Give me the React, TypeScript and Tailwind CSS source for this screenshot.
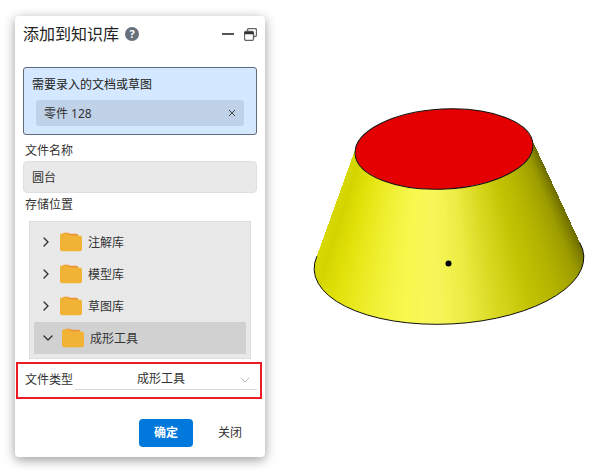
import { useState } from 'react'
import { ChevronDown, ChevronRight } from 'lucide-react'
import clsx from 'clsx'

const FOLDERS = ['注解库', '模型库', '草图库', '成形工具']

// shade of the cone wall by angle in degrees, from the right edge round the front to the left
const SHADES: [number, number[]][] = [
  [-14, [92, 92, 0]],
  [5, [122, 122, 0]],
  [20, [156, 156, 0]],
  [38, [178, 178, 0]],
  [55, [196, 196, 4]],
  [70, [216, 216, 32]],
  [84, [236, 236, 68]],
  [97, [246, 246, 90]],
  [110, [248, 248, 80]],
  [122, [242, 242, 60]],
  [138, [232, 232, 28]],
  [150, [224, 224, 8]],
  [165, [212, 212, 0]],
  [194, [218, 218, 0]],
]

function shadeAt(deg: number) {
  const i = Math.max(1, SHADES.findIndex(([d]) => d >= deg))
  const [d0, c0] = SHADES[i - 1]
  const [d1, c1] = SHADES[i]
  const k = (deg - d0) / (d1 - d0)
  return `rgb(${c0.map((c, n) => Math.round(c + (c1[n] - c) * k)).join(',')})`
}

const TILT = (-3 * Math.PI) / 180

function rim(cx: number, cy: number, rx: number, ry: number, deg: number) {
  const t = (deg * Math.PI) / 180
  const u = rx * Math.cos(t)
  const v = ry * Math.sin(t)
  const x = cx + u * Math.cos(TILT) - v * Math.sin(TILT)
  const y = cy + u * Math.sin(TILT) + v * Math.cos(TILT)
  return `${x.toFixed(2)},${y.toFixed(2)}`
}

const top = (deg: number) => rim(135, 43, 89, 40, deg)
const bottom = (deg: number) => rim(140, 157, 135, 61, deg)

const FACETS = Array.from({ length: 206 }, (_, i) => -13 + i)

function Cone() {
  return (
    <svg viewBox="0 0 279 222" className="w-full max-w-[279px]" role="img" aria-label="圆台">
      <g shapeRendering="crispEdges">
        {FACETS.map((d) => (
          <polygon
            key={d}
            points={`${top(d)} ${top(d + 1)} ${bottom(d + 1)} ${bottom(d)}`}
            fill={shadeAt(d + 0.5)}
          />
        ))}
      </g>
      <path d={`M${bottom(-13)} A135 61 -3 1 1 ${bottom(193)}`} fill="none" stroke="#111" />
      <ellipse cx="135" cy="43" rx="89" ry="40" transform="rotate(-3 135 43)" fill="#e40000" stroke="#111" />
      <circle cx="139.5" cy="157.5" r="3" fill="#000" />
    </svg>
  )
}

function FolderIcon() {
  return (
    <svg viewBox="0 0 22 20" className="h-5 w-[22px] shrink-0" aria-hidden="true">
      <path d="M3 1.5Q3 .8 4 .8H8L10 1.8H16.5Q18 1.8 18 3.2V7H3Z" fill="#ee9536" />
      <path
        d="M0 3Q0 1.6 2 1.6H6.5Q7.5 1.6 8.2 2.4L9.2 3.4H20Q22 3.4 22 5.4V17.2Q22 19.2 20 19.2H2Q0 19.2 0 17.2Z"
        fill="#f0b336"
      />
    </svg>
  )
}

export default function App() {
  const [selected, setSelected] = useState('成形工具')

  return (
    <main className="flex items-start gap-11 bg-white py-4 pr-5 pl-[15px] font-['Noto_Sans','Noto_Sans_CJK_SC',sans-serif] text-xs text-[#333]">
      <section className="w-[250px] shrink-0 rounded bg-white pb-2.5 shadow-[0_3px_12px_rgba(0,0,0,0.4)]">
        <header className="flex h-9 items-center px-2">
          <h1 className="text-base text-[#222]">添加到知识库</h1>
          <button
            aria-label="帮助"
            className="ml-1.5 flex size-3.5 items-center justify-center rounded-full bg-[#66717c] text-[11px] font-bold text-white"
          >
            ?
          </button>
          <button aria-label="最小化" className="ml-auto p-1">
            <svg viewBox="0 0 12 12" className="size-3">
              <path d="M0 6H12" stroke="#555" strokeWidth="2" />
            </svg>
          </button>
          <button aria-label="还原" className="ml-1.5">
            <svg viewBox="0 0 13 13" className="size-[13px]" fill="none" stroke="#666">
              <path d="M3.5 3V2Q3.5 .5 5 .5H11Q12.5 .5 12.5 2V7Q12.5 8.5 11 8.5H9.5" strokeWidth="1.3" />
              <rect x="0.5" y="3.5" width="9" height="9" rx="1.5" strokeWidth="1.3" />
              <path d="M.5 5H9.5" stroke="#333" strokeWidth="2.5" />
            </svg>
          </button>
        </header>

        <div className="mx-2 mt-[15px] rounded-[3px] border border-[#5f6b78] bg-[#d4e8ff] px-2 py-2">
          <p className="pt-px leading-4 text-[#222]">需要录入的文档或草图</p>
          <div className="mx-1 mt-[7px] flex h-[26px] items-center justify-between rounded-[3px] bg-[#c0d2e8] pr-1.5 pl-2">
            <span className="pt-0.5">零件 128</span>
            <button aria-label="移除" className="px-0.5">
              <svg viewBox="0 0 8 8" className="size-2" stroke="#444">
                <path d="M1 1L7 7M7 1L1 7" />
              </svg>
            </button>
          </div>
        </div>

        <div className="mx-2 mt-2 flex flex-col">
          <label htmlFor="name" className="px-0.5 leading-4">
            文件名称
          </label>
          <input
            id="name"
            defaultValue="圆台"
            className="mt-0.5 h-8 w-full rounded border border-[#dcdfe4] bg-[#e9e9e9] px-2 outline-none"
          />
          <p className="mt-1 px-0.5 leading-4">存储位置</p>
        </div>

        <ul className="mx-3.5 mt-2 border border-[#dcdfe6] bg-[#e9e9e9] p-1">
          {FOLDERS.map((name) => {
            const active = name === selected
            const Chevron = active ? ChevronDown : ChevronRight
            return (
              <li key={name}>
                <button
                  onClick={() => setSelected(name)}
                  className={clsx('flex h-8 w-full items-center', active ? 'bg-[#d1d1d1] pl-1.5' : 'pl-1')}
                >
                  <Chevron className="mr-1.5 size-4 shrink-0" strokeWidth={2} color="#333" />
                  <FolderIcon />
                  <span className="ml-1.5 pt-0.5">{name}</span>
                </button>
              </li>
            )
          })}
        </ul>

        <div className="mt-[3px] mr-[3px] ml-px flex h-[37px] items-center border-2 border-[#ed1c24] pr-[3px] pb-0.5 pl-[7px]">
          <label htmlFor="type" className="shrink-0">
            文件类型
          </label>
          <div className="relative ml-0.5 grow">
            <select
              id="type"
              className="h-5 w-full appearance-none border-b border-[#d5d8dc] bg-white pr-2.5 [text-align-last:center] outline-none"
            >
              <option>成形工具</option>
            </select>
            <ChevronDown className="pointer-events-none absolute top-0.5 right-1 size-4" strokeWidth={1.5} color="#b4bbc2" />
          </div>
        </div>

        <footer className="mt-5 flex justify-end gap-3 pr-2.5">
          <button className="h-7 rounded bg-[#0078dc] px-[15px] font-bold text-white">确定</button>
          <button className="h-7 px-[13px]">关闭</button>
        </footer>
      </section>

      <div className="mt-[90px] flex grow">
        <Cone />
      </div>
    </main>
  )
}
